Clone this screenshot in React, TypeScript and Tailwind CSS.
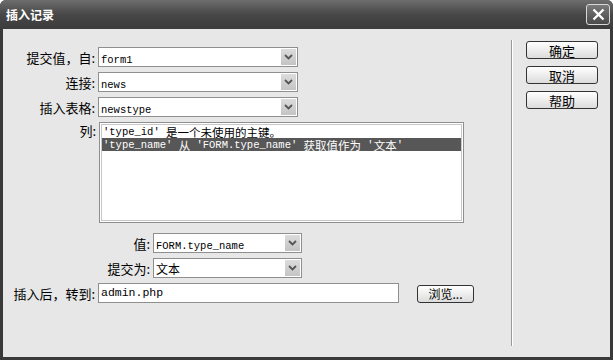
const cjk = { fontFamily: '"Noto Sans CJK SC", "Noto Sans", sans-serif' };
const mono = { fontFamily: '"Liberation Mono", monospace' };

// splits a string into latin and CJK runs so each gets its own font and size
function Mixed({ text, latin, han }: { text: string; latin: string; han: string }) {
  const parts = text.match(/[\u3000-\u9fff\uff00-\uffef]+|[^\u3000-\u9fff\uff00-\uffef]+/g) ?? [];
  return (
    <>
      {parts.map((p, i) =>
        /[\u3000-\u9fff\uff00-\uffef]/.test(p) ? (
          <span key={i} className={han} style={cjk}>
            {p}
          </span>
        ) : (
          <span key={i} className={latin} style={mono}>
            {p}
          </span>
        ),
      )}
    </>
  );
}

function Chevron() {
  return (
    <svg width="9" height="6" viewBox="0 0 9 6">
      <path d="M1 1 L4.5 4.5 L8 1" fill="none" stroke="#555" strokeWidth="1.8" />
    </svg>
  );
}

function Select({ value, width }: { value: string; width: string }) {
  return (
    <div
      className={`flex h-[20px] ${width} items-center border border-[#8f8f8f] bg-white pl-[2px] pr-[1px]`}
    >
      <span className="flex-1 truncate leading-none text-black">
        <Mixed text={value} latin="text-[10.5px]" han="text-[12px]" />
      </span>
      <div className="flex h-[16px] w-[15px] items-center justify-center bg-gradient-to-b from-[#dcdcdc] to-[#c4c4c4]">
        <Chevron />
      </div>
    </div>
  );
}

function Label({ text, width }: { text: string; width: string }) {
  return (
    <div className={`${width} shrink-0 pr-[3px] text-right text-[13px] leading-none text-black`} style={cjk}>
      {text}
    </div>
  );
}

function SideButton({ text }: { text: string }) {
  return (
    <button
      className="flex h-[18px] w-[72px] items-center justify-center rounded-[3px] border border-[#333] bg-gradient-to-b from-white to-[#dcdcdc] text-[13px] leading-none text-black"
      style={cjk}
    >
      {text}
    </button>
  );
}

export default function App() {
  return (
    <div className="flex h-[360px] w-[613px] flex-col overflow-hidden rounded-t-[6px] bg-[#3a3a3a]">
      <div className="flex h-[29px] shrink-0 items-center justify-between bg-gradient-to-b from-[#6e6e6e] via-[#474747] to-[#3c3c3c] pl-[6px] pr-[3px]">
        <span className="text-[12px] font-bold leading-none text-white" style={cjk}>
          插入记录
        </span>
        <div className="flex h-[21px] w-[24px] items-center justify-center rounded-[3px] border border-[#d8d8d8] bg-gradient-to-b from-[#7a7a7a] to-[#4a4a4a]">
          <svg width="13" height="13" viewBox="0 0 13 13">
            <path d="M1.5 1.5 L11.5 11.5 M11.5 1.5 L1.5 11.5" stroke="white" strokeWidth="2.4" />
          </svg>
        </div>
      </div>

      <div className="mx-[3px] mb-[3px] flex flex-1 bg-[#e7e7e7]">
        <div className="flex w-[508px] flex-col pt-[18px]">
          <div className="flex items-center">
            <Label text="提交值，自:" width="w-[95px]" />
            <Select value="form1" width="w-[200px]" />
          </div>
          <div className="mt-[5px] flex items-center">
            <Label text="连接:" width="w-[95px]" />
            <Select value="news" width="w-[200px]" />
          </div>
          <div className="mt-[5px] flex items-center">
            <Label text="插入表格:" width="w-[95px]" />
            <Select value="newstype" width="w-[200px]" />
          </div>
          <div className="mt-[5px] flex items-start">
            <div className="pt-[2px]">
              <Label text="列:" width="w-[96px]" />
            </div>
            <div className="h-[101px] w-[365px] border border-[#8f8f8f] bg-white p-[1px]">
              <div className="h-full border border-[#c8c8c8]">
                <div className="flex h-[13px] items-center overflow-hidden whitespace-pre px-[1px] leading-[12px] text-black">
                  <Mixed text="'type_id' 是一个未使用的主键。" latin="text-[10.5px]" han="text-[11.5px]" />
                </div>
                <div className="flex h-[13px] items-center overflow-hidden whitespace-pre bg-[#575757] px-[1px] leading-[12px] text-white">
                  <Mixed
                    text="'type_name' 从 'FORM.type_name' 获取值作为 '文本'"
                    latin="text-[10.5px]"
                    han="text-[11.5px]"
                  />
                </div>
              </div>
            </div>
          </div>
          <div className="mt-[10px] flex items-center">
            <Label text="值:" width="w-[150px]" />
            <Select value="FORM.type_name" width="w-[149px]" />
          </div>
          <div className="mt-[5px] flex items-center">
            <Label text="提交为:" width="w-[150px]" />
            <Select value="文本" width="w-[149px]" />
          </div>
          <div className="mt-[5px] flex items-center">
            <Label text="插入后，转到:" width="w-[95px]" />
            <div className="flex h-[20px] w-[301px] items-center border border-[#8f8f8f] bg-white pl-[2px]">
              <span className="text-[11.5px] leading-none text-black" style={mono}>
                admin.php
              </span>
            </div>
            <button
              className="ml-[18px] mt-[2px] flex h-[18px] w-[57px] items-center justify-center rounded-[3px] border border-[#333] bg-gradient-to-b from-white to-[#dcdcdc] text-[12px] leading-none text-black"
              style={cjk}
            >
              浏览...
            </button>
          </div>
        </div>

        <div className="mb-[11px] mt-[11px] w-[2px] border-l border-r border-l-[#9a9a9a] border-r-white" />

        <div className="flex flex-col gap-[7px] pl-[13px] pt-[12px]">
          <SideButton text="确定" />
          <SideButton text="取消" />
          <SideButton text="帮助" />
        </div>
      </div>
    </div>
  );
}
